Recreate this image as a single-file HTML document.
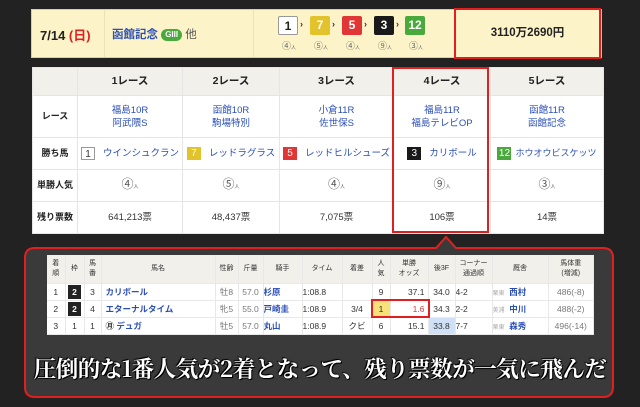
<!DOCTYPE html><html><head><meta charset="utf-8"><style>
*{margin:0;padding:0;box-sizing:border-box}
body{width:640px;height:407px;background:#222;position:relative;overflow:hidden;font-family:"Liberation Sans","Noto Sans CJK JP",sans-serif;color:#333}
.abs{position:absolute}
.bar{left:31px;top:9px;width:571px;height:49px;background:#fdf3c8;border:1px solid #d8cfa8}
.nb{position:absolute;top:16px;width:20px;height:19px;font-size:12px;font-weight:bold;text-align:center;line-height:19px;border-radius:2px}
.gt{font-size:9px;color:#666}
table{border-collapse:collapse;table-layout:fixed}
.t2{position:absolute;left:32px;top:67px;width:572px;height:166px;background:#fff;font-size:9.5px}
.t2 td{border:1px solid #e5e5e5;text-align:center;vertical-align:middle;padding:0;line-height:13px;white-space:nowrap;overflow:hidden}
.t2 tr.h td{background:#f2f0ea;font-weight:bold;font-size:10.5px;color:#222}
.t2 td.l{background:#fff;font-weight:bold;color:#222;font-size:9px}
.blue{color:#2b4fb8}
.hb{display:inline-block;width:14px;height:13px;line-height:13px;font-size:10px;color:#fff;margin-right:8px;vertical-align:middle}
.t3{position:absolute;left:47px;top:255px;width:547px;background:#fff;font-size:8.5px}
.t3 td{border-right:1px solid #e8e8e8;border-bottom:1px solid #e8e8e8;height:17px;padding:0;text-align:center;color:#333;white-space:nowrap;overflow:hidden}
.t3 tr.h td{background:#f2f0ea;height:28px;font-size:7px;line-height:10px}
.fr{display:inline-block;width:13px;height:14px;background:#222;color:#fff;font-weight:bold;line-height:14px}
.cap{left:0;width:640px;top:352px;text-align:center;font-family:"Noto Serif CJK SC","Liberation Serif",serif;font-weight:bold;font-size:22.5px;color:#fff;letter-spacing:-0.5px;white-space:nowrap;text-shadow:0 0 2px #000,1px 1px 0 #000,-1px -1px 0 #000}
</style></head><body>
<div class="abs bar"></div>
<div class="abs" style="left:104px;top:10px;width:1px;height:47px;background:#ece2b8"></div>
<div class="abs" style="left:253px;top:10px;width:1px;height:47px;background:#ece2b8"></div>
<div class="abs" style="left:40px;top:25px;font-size:13px;font-weight:bold;color:#222">7/14 <span style="color:#e02020">(日)</span></div>
<div class="abs" style="left:112px;top:26px;font-size:11.5px;font-weight:bold;color:#2b4fb8">函館記念 <span style="display:inline-block;background:#4aa93c;color:#fff;font-size:8px;border-radius:7px;padding:0 4px;line-height:12px;vertical-align:1px">GIII</span> <span style="color:#555;font-weight:normal">他</span></div>
<div class="nb" style="left:278px;background:#fff;border:1px solid #999;color:#222">1</div>
<div class="nb" style="left:310px;background:#e2c32c;color:#fff">7</div>
<div class="nb" style="left:342px;background:#e03636;color:#fff">5</div>
<div class="nb" style="left:374px;background:#1a1a1a;color:#fff">3</div>
<div class="nb" style="left:405px;background:#4aa93c;color:#fff">12</div>
<div class="abs" style="left:300px;top:19px;font-size:9px;font-weight:bold">›</div>
<div class="abs" style="left:332px;top:19px;font-size:9px;font-weight:bold">›</div>
<div class="abs" style="left:364px;top:19px;font-size:9px;font-weight:bold">›</div>
<div class="abs" style="left:396px;top:19px;font-size:9px;font-weight:bold">›</div>
<div class="abs gt" style="left:282px;top:39px">④<span style="font-size:5px">人</span></div>
<div class="abs gt" style="left:314px;top:39px">⑤<span style="font-size:5px">人</span></div>
<div class="abs gt" style="left:346px;top:39px">④<span style="font-size:5px">人</span></div>
<div class="abs gt" style="left:378px;top:39px">⑨<span style="font-size:5px">人</span></div>
<div class="abs gt" style="left:409px;top:39px">③<span style="font-size:5px">人</span></div>
<div class="abs" style="left:454px;top:8px;width:147px;height:51px;border:2px solid #e02020;background:#fdf3c8;text-align:center;line-height:47px;font-size:11.5px;font-weight:bold;color:#222">3110万2690円</div>

<table class="t2">
<tr class="h" style="height:28px"><td style="width:45px"></td><td style="width:105px">1レース</td><td style="width:97px">2レース</td><td style="width:114px">3レース</td><td style="width:97px">4レース</td><td>5レース</td></tr>
<tr style="height:42px"><td class="l">レース</td><td class="blue">福島10R<br>阿武隈S</td><td class="blue">函館10R<br>駒場特別</td><td class="blue">小倉11R<br>佐世保S</td><td class="blue">福島11R<br>福島テレビOP</td><td class="blue">函館11R<br>函館記念</td></tr>
<tr style="height:32px"><td class="l">勝ち馬</td><td class="blue"><span class="hb" style="border:1px solid #999;color:#333;background:#fff">1</span>ウインシュクラン</td><td class="blue"><span class="hb" style="background:#e2c32c">7</span>レッドラグラス</td><td class="blue"><span class="hb" style="background:#e03636">5</span>レッドヒルシューズ</td><td class="blue"><span class="hb" style="background:#1a1a1a">3</span>カリボール</td><td class="blue" style="font-size:9px"><span class="hb" style="background:#4aa93c;margin-right:4px">12</span>ホウオウビスケッツ</td></tr>
<tr style="height:32px"><td class="l">単勝人気</td><td style="font-size:12px;color:#555">④<span style="font-size:5px">人</span></td><td style="font-size:12px;color:#555">⑤<span style="font-size:5px">人</span></td><td style="font-size:12px;color:#555">④<span style="font-size:5px">人</span></td><td style="font-size:12px;color:#555">⑨<span style="font-size:5px">人</span></td><td style="font-size:12px;color:#555">③<span style="font-size:5px">人</span></td></tr>
<tr style="height:32px"><td class="l">残り票数</td><td>641,213票</td><td>48,437票</td><td>7,075票</td><td>106票</td><td>14票</td></tr>
</table>
<div class="abs" style="left:392px;top:67px;width:97px;height:166px;border:2px solid #e02020"></div>

<svg class="abs" style="left:0;top:0" width="640" height="407"><path d="M35 248 H436 L446 237 L456 248 H603 Q613 248 613 258 V387 Q613 397 603 397 H35 Q25 397 25 387 V258 Q25 248 35 248 Z" fill="#3a3a3a" stroke="#e02020" stroke-width="2"/></svg>

<table class="t3">
<tr class="h"><td style="width:18px">着<br>順</td><td style="width:19px">枠</td><td style="width:17px">馬<br>番</td><td style="width:114px">馬名</td><td style="width:23px">性齢</td><td style="width:25px">斤量</td><td style="width:39px">騎手</td><td style="width:40px">タイム</td><td style="width:30px">着差</td><td style="width:18px">人<br>気</td><td style="width:38px">単勝<br>オッズ</td><td style="width:27px">後3F</td><td style="width:37px">コーナー<br>通過順</td><td style="width:56px">厩舎</td><td>馬体重<br>(増減)</td></tr>
<tr><td>1</td><td><span class="fr">2</span></td><td>3</td><td style="text-align:left;padding-left:4px;color:#2b4fb8;font-weight:bold">カリボール</td><td style="color:#777">牡8</td><td style="color:#777">57.0</td><td style="text-align:left;color:#2b4fb8;font-weight:bold">杉原</td><td style="text-align:left">1:08.8</td><td></td><td>9</td><td style="text-align:right;padding-right:3px">37.1</td><td>34.0</td><td style="text-align:left">4-2</td><td style="text-align:left;color:#2b4fb8;font-weight:bold"><span style="color:#aaa;font-weight:normal;font-size:6px">栗東</span> &nbsp;西村</td><td style="color:#777">486(-8)</td></tr>
<tr><td>2</td><td><span class="fr">2</span></td><td>4</td><td style="text-align:left;padding-left:4px;color:#2b4fb8;font-weight:bold">エターナルタイム</td><td style="color:#777">牝5</td><td style="color:#777">55.0</td><td style="text-align:left;color:#2b4fb8;font-weight:bold">戸崎圭</td><td style="text-align:left">1:08.9</td><td>3/4</td><td style="background:#f7e27a">1</td><td style="text-align:right;padding-right:3px;color:#e03636">1.6</td><td>34.3</td><td style="text-align:left">2-2</td><td style="text-align:left;color:#2b4fb8;font-weight:bold"><span style="color:#aaa;font-weight:normal;font-size:6px">美浦</span> &nbsp;中川</td><td style="color:#777">488(-2)</td></tr>
<tr><td>3</td><td>1</td><td>1</td><td style="text-align:left;padding-left:4px;color:#2b4fb8;font-weight:bold"><span style="color:#333">㊊</span> デュガ</td><td style="color:#777">牡5</td><td style="color:#777">57.0</td><td style="text-align:left;color:#2b4fb8;font-weight:bold">丸山</td><td style="text-align:left">1:08.9</td><td>クビ</td><td>6</td><td style="text-align:right;padding-right:3px">15.1</td><td style="background:#cfe0f7">33.8</td><td style="text-align:left">7-7</td><td style="text-align:left;color:#2b4fb8;font-weight:bold"><span style="color:#aaa;font-weight:normal;font-size:6px">栗東</span> &nbsp;森秀</td><td style="color:#777">496(-14)</td></tr>
</table>
<div class="abs" style="left:371px;top:299px;width:59px;height:19px;border:2px solid #e02020"></div>
<div class="abs cap">圧倒的な1番人気が2着となって、残り票数が一気に飛んだ</div>
</body></html>
